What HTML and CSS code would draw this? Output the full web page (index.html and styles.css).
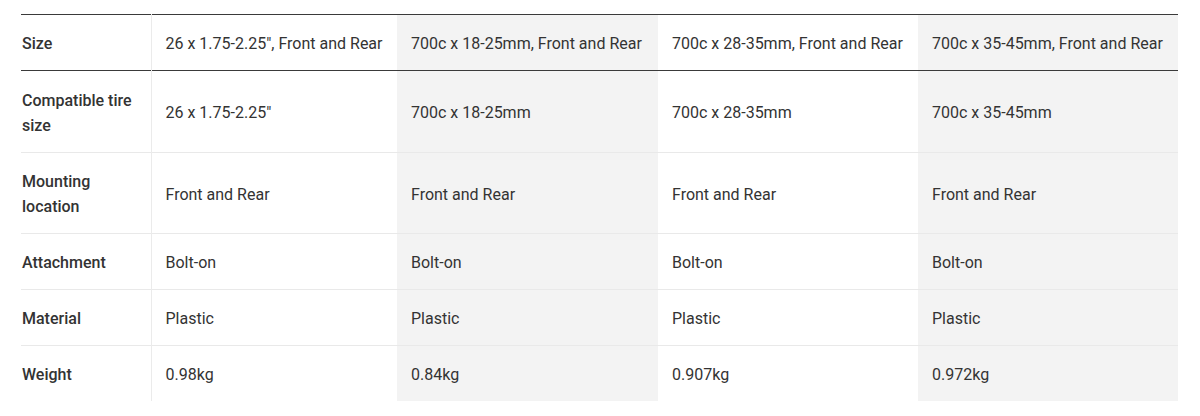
FILE: index.html
```html
<!DOCTYPE html>
<html>
<head>
<meta charset="utf-8">
<link rel="stylesheet" href="styles.css">
</head>
<body>
<div class="wrap">
<table class="spec">
  <colgroup>
    <col class="c-label">
    <col class="c-1">
    <col class="c-2">
    <col class="c-3">
    <col class="c-4">
  </colgroup>
  <thead>
    <tr>
      <th class="label">Size</th>
      <td>26 x 1.75-2.25", Front and Rear</td>
      <td class="alt">700c x 18-25mm, Front and Rear</td>
      <td>700c x 28-35mm, Front and Rear</td>
      <td class="alt">700c x 35-45mm, Front and Rear</td>
    </tr>
  </thead>
  <tbody>
    <tr class="tall">
      <th class="label">Compatible tire size</th>
      <td>26 x 1.75-2.25"</td>
      <td class="alt">700c x 18-25mm</td>
      <td>700c x 28-35mm</td>
      <td class="alt">700c x 35-45mm</td>
    </tr>
    <tr class="tall2">
      <th class="label">Mounting location</th>
      <td>Front and Rear</td>
      <td class="alt">Front and Rear</td>
      <td>Front and Rear</td>
      <td class="alt">Front and Rear</td>
    </tr>
    <tr>
      <th class="label">Attachment</th>
      <td>Bolt-on</td>
      <td class="alt">Bolt-on</td>
      <td>Bolt-on</td>
      <td class="alt">Bolt-on</td>
    </tr>
    <tr>
      <th class="label">Material</th>
      <td>Plastic</td>
      <td class="alt">Plastic</td>
      <td>Plastic</td>
      <td class="alt">Plastic</td>
    </tr>
    <tr class="last">
      <th class="label">Weight</th>
      <td>0.98kg</td>
      <td class="alt">0.84kg</td>
      <td>0.907kg</td>
      <td class="alt">0.972kg</td>
    </tr>
  </tbody>
</table>
</div>
</body>
</html>
```
FILE: styles.css
```css
html, body {
  margin: 0;
  padding: 0;
  background: #ffffff;
}

.wrap {
  padding: 14px 22px 0 21px;
}

.spec {
  width: 1157px;
  table-layout: fixed;
  border-collapse: collapse;
  font-family: Roboto, "Liberation Sans", Arial, sans-serif;
  font-size: 16px;
  line-height: 25px;
  color: #333333;
}

.c-label { width: 130px; }
.c-1 { width: 246px; }
.c-2 { width: 261px; }
.c-3 { width: 260px; }
.c-4 { width: 260px; }

.spec thead tr {
  border-top: 1px solid #3a3a3a;
  border-bottom: 1px solid #3a3a3a;
}

.spec tbody tr {
  border-bottom: 1px solid #e9e9e9;
}

.spec tbody tr.last {
  border-bottom: none;
}

.spec th,
.spec td {
  height: 53px;
  padding: 2px 14px 0;
  text-align: left;
  vertical-align: middle;
  font-weight: 400;
}

.spec tr.tall th,
.spec tr.tall td {
  height: 79px;
}

.spec tr.tall2 th,
.spec tr.tall2 td {
  height: 78px;
}

.spec th.label {
  padding: 2px 10px 0 1px;
  font-weight: 500;
  border-right: 1px solid #ebebeb;
}

.spec td.alt {
  background: #f3f3f3;
}
```
